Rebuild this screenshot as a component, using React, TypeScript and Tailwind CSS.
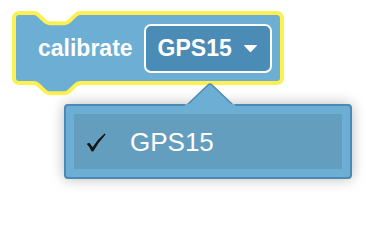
import React from "react";

const BLOCK_PATH =
  "M 2,7 A 5,5 0 0 1 7,2 H 22 c 2.56,0 3.84,1.28 5.12,2.56 l 5.12,5.12 c 1.28,1.28 2.56,2.56 5.12,2.56 h 15.36 c 2.56,0 3.84,-1.28 5.12,-2.56 l 5.12,-5.12 c 1.28,-1.28 2.56,-2.56 5.12,-2.56 H 265 A 5,5 0 0 1 270,7 V 67 A 5,5 0 0 1 265,72 H 68.08 c -2.56,0 -3.84,1.28 -5.12,2.56 l -5.12,5.12 c -1.28,1.28 -2.56,2.56 -5.12,2.56 h -15.36 c -2.56,0 -3.84,-1.28 -5.12,-2.56 l -5.12,-5.12 c -1.28,-1.28 -2.56,-2.56 -5.12,-2.56 H 7 A 5,5 0 0 1 2,67 Z";

export default function App() {
  return (
    <div className="relative w-[366px] h-[200px] bg-white overflow-hidden font-['Liberation_Sans',Arial,sans-serif]">
      {/* Block */}
      <div className="relative ml-[12px] mt-[11px] w-[272px] h-[74px] flex items-center">
        <svg
          className="absolute left-0 top-0 overflow-visible"
          width="272"
          height="86"
          viewBox="0 0 272 86"
        >
          <path d={BLOCK_PATH} fill="#6daed4" stroke="#fdf050" strokeWidth="4" strokeLinejoin="round" />
        </svg>
        <span className="relative ml-[26px] text-white font-bold text-[23px] leading-none">calibrate</span>
        <div className="relative ml-[11px] w-[128px] h-[49px] rounded-[7px] border-2 border-white bg-[#4a8cb6] flex items-center pl-[12px] pr-[12px] justify-between">
          <span className="text-white font-bold text-[23px] leading-none">GPS15</span>
          <svg width="15" height="9" viewBox="0 0 15 9">
            <path d="M 1.5,1 H 13.5 Q 14.5,1 13.8,1.8 L 8.2,7.8 Q 7.5,8.6 6.8,7.8 L 1.2,1.8 Q 0.5,1 1.5,1 Z" fill="#ffffff" />
          </svg>
        </div>
      </div>

      {/* Dropdown menu */}
      <div className="absolute left-[64px] top-[104px] w-[288px] h-[75px] rounded-[4px] border-2 border-[#4a8ab4] bg-[#6daed4] shadow-[0_0_14px_rgba(0,0,0,0.28)] p-[8px]">
        <div className="w-full h-full bg-[#639ebf] flex items-center">
          <svg className="ml-[12px] mt-[2px]" width="20" height="19" viewBox="0 0 20 19">
            <path d="M 0.8,11 Q 2.2,9.6 3.6,10 L 6.6,14.2 Q 12,6 18.6,0.6 L 19.6,1.4 Q 12.5,9 7.4,18.2 L 5.6,18.4 Q 3.6,13.6 0.8,11 Z" fill="#151515" />
          </svg>
          <span className="ml-[24px] text-white text-[26px] leading-none">GPS15</span>
        </div>
      </div>
      <svg className="absolute left-[185px] top-[82px]" width="50" height="24" viewBox="0 0 50 24">
        <path d="M 2,23 L 23,3 Q 25,1 27,3 L 48,23 Z" fill="#6daed4" stroke="#4a8ab4" strokeWidth="1.5" strokeLinejoin="round" />
        <rect x="0" y="22" width="50" height="2" fill="#6daed4" />
      </svg>
    </div>
  );
}
